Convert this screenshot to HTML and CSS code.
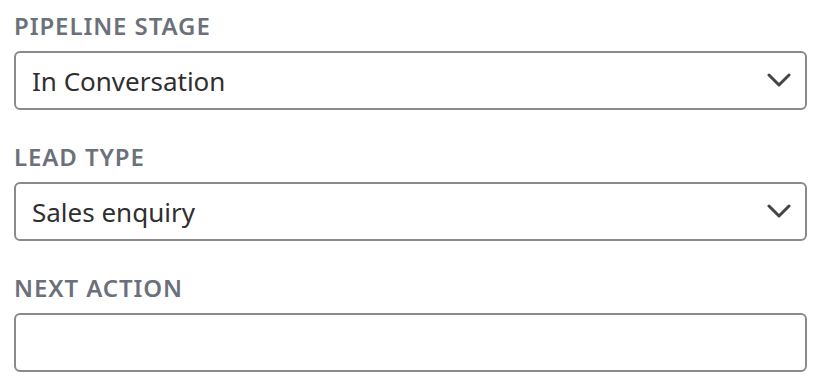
FILE: index.html
```html
<!DOCTYPE html>
<html lang="en">
<head>
  <meta charset="UTF-8" />
  <title>Lead details</title>
  <link rel="stylesheet" href="styles.css">
</head>
<body>
  <form class="lead-form">
    <div class="field">
      <label for="stage">Pipeline Stage</label>
      <div class="select-wrap">
        <select id="stage">
          <option>In Conversation</option>
        </select>
        <svg class="chevron" viewBox="0 0 24 15" width="24" height="15"><path d="M2 2l10 10 10-10" fill="none" stroke="#444" stroke-width="3" stroke-linecap="round" stroke-linejoin="round"/></svg>
      </div>
    </div>
    <div class="field">
      <label for="type">Lead Type</label>
      <div class="select-wrap">
        <select id="type">
          <option>Sales enquiry</option>
        </select>
        <svg class="chevron" viewBox="0 0 24 15" width="24" height="15"><path d="M2 2l10 10 10-10" fill="none" stroke="#444" stroke-width="3" stroke-linecap="round" stroke-linejoin="round"/></svg>
      </div>
    </div>
    <div class="field">
      <label for="next">Next Action</label>
      <input id="next" type="text">
    </div>
  </form>
</body>
</html>
```

FILE: styles.css
```css
body {
  margin: 0;
  background: #fff;
  font-family: "Noto Sans", "Open Sans", sans-serif;
}
.lead-form {
  padding: 11px 33px 0 14px;
}
.field {
  margin-bottom: 32px;
}
.field label {
  display: block;
  font-size: 24px;
  font-weight: 600;
  color: #6b717b;
  text-transform: uppercase;
  line-height: 30px;
  margin-bottom: 10px;
  letter-spacing: 0.9px;
}
.select-wrap {
  position: relative;
}
select,
input {
  display: block;
  width: 100%;
  box-sizing: border-box;
  height: 59px;
  border: 2px solid #8a8a8a;
  border-radius: 6px;
  background: #fff;
  font-family: inherit;
  font-size: 26px;
  color: #2f2f2f;
  padding: 0 16px;
  appearance: none;
  -webkit-appearance: none;
  outline: none;
}
.chevron {
  position: absolute;
  right: 16px;
  top: 22px;
  pointer-events: none;
}
```
